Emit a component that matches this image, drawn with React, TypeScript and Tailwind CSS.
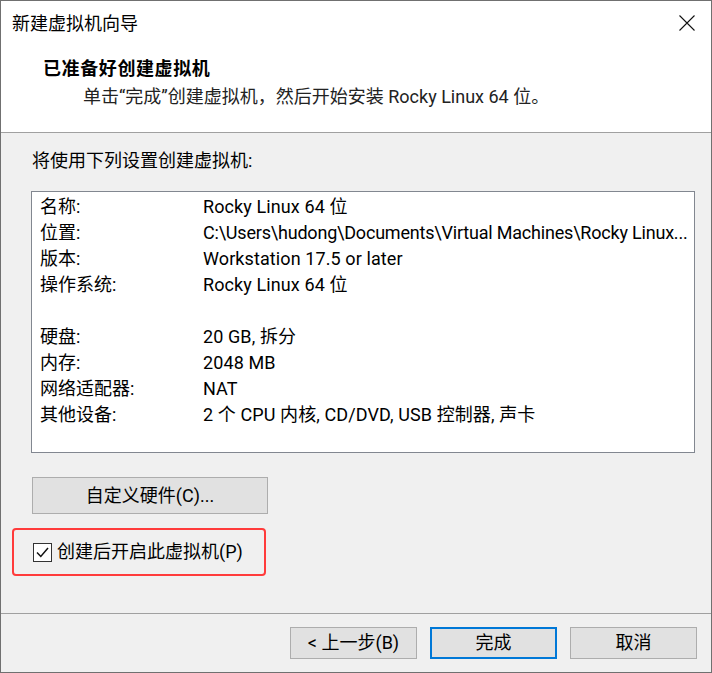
import React from 'react'

const rows: [string, string][] = [
  ['名称:', 'Rocky Linux 64 位'],
  ['位置:', 'C:\\Users\\hudong\\Documents\\Virtual Machines\\Rocky Linux...'],
  ['版本:', 'Workstation 17.5 or later'],
  ['操作系统:', 'Rocky Linux 64 位'],
  ['', ''],
  ['硬盘:', '20 GB, 拆分'],
  ['内存:', '2048 MB'],
  ['网络适配器:', 'NAT'],
  ['其他设备:', '2 个 CPU 内核, CD/DVD, USB 控制器, 声卡'],
]

function WinButton({ label, primary, className }: { label: string; primary?: boolean; className?: string }) {
  return (
    <div
      className={`flex items-center justify-center bg-[#e1e1e1] ${
        primary ? 'border-2 border-[#0078d7]' : 'border border-[#adadad]'
      } ${className ?? ''}`}
    >
      {label}
    </div>
  )
}

export default function App() {
  return (
    <div className="w-[712px] h-[673px] flex flex-col border border-[#707070] bg-[#f0f0f0] text-[18px] text-black font-['Roboto','Noto_Sans_CJK_SC',sans-serif] leading-none">
      {/* title + header */}
      <div className="h-[132px] bg-white border-b border-[#a0a0a0] flex flex-col">
        <div className="h-[46px] flex items-center justify-between pl-[11px] pr-[16px]">
          <span>新建虚拟机向导</span>
          <svg width="16" height="16" viewBox="0 0 16 16" className="mt-[-2px]">
            <path d="M0.5 0.5 L15.5 15.5 M15.5 0.5 L0.5 15.5" stroke="#111" strokeWidth="1.1" fill="none" />
          </svg>
        </div>
        <div className="pl-[42px] pt-[13px] font-bold tracking-[0.6px]">已准备好创建虚拟机</div>
        <div className="pl-[82px] pt-[10px] text-[#222]">单击“完成”创建虚拟机，然后开始安装 Rocky Linux 64 位。</div>
      </div>

      {/* body */}
      <div className="flex-1 flex flex-col pl-[30px]">
        <div className="pt-[19px] pl-[1px]">将使用下列设置创建虚拟机:</div>
        <div className="mt-[21px] w-[664px] h-[262px] bg-white border border-[#828790] pt-[2px] overflow-hidden">
          {rows.map(([k, v], i) => (
            <div key={i} className="h-[26px] flex items-center">
              <span className="w-[171px] pl-[8px] shrink-0">{k}</span>
              <span className={`whitespace-nowrap ${i === 1 ? 'tracking-[-0.2px]' : 'tracking-[0.1px]'}`}>{v}</span>
            </div>
          ))}
        </div>
        <WinButton label="自定义硬件(C)..." className="mt-[24px] ml-[1px] w-[236px] h-[37px]" />
        <div className="mt-[14px] ml-[-19px] w-[254px] h-[48px] border-2 border-[#ff3b3b] rounded-[4px] flex items-center pl-[19px]">
          <div className="w-[19px] h-[19px] border border-[#333] bg-white flex items-center justify-center">
            <svg width="15" height="15" viewBox="0 0 15 15">
              <path d="M2 7.5 L5.8 11.5 L13 3" stroke="#111" strokeWidth="1.5" fill="none" />
            </svg>
          </div>
          <span className="ml-[5px]">创建后开启此虚拟机(P)</span>
        </div>
      </div>

      {/* footer */}
      <div className="h-[59px] border-t border-[#a0a0a0] flex items-start justify-end gap-[13px] pt-[13px] pr-[14px]">
        <WinButton label="< 上一步(B)" className="w-[127px] h-[32px]" />
        <WinButton label="完成" primary className="w-[127px] h-[32px]" />
        <WinButton label="取消" className="w-[127px] h-[32px]" />
      </div>
    </div>
  )
}
